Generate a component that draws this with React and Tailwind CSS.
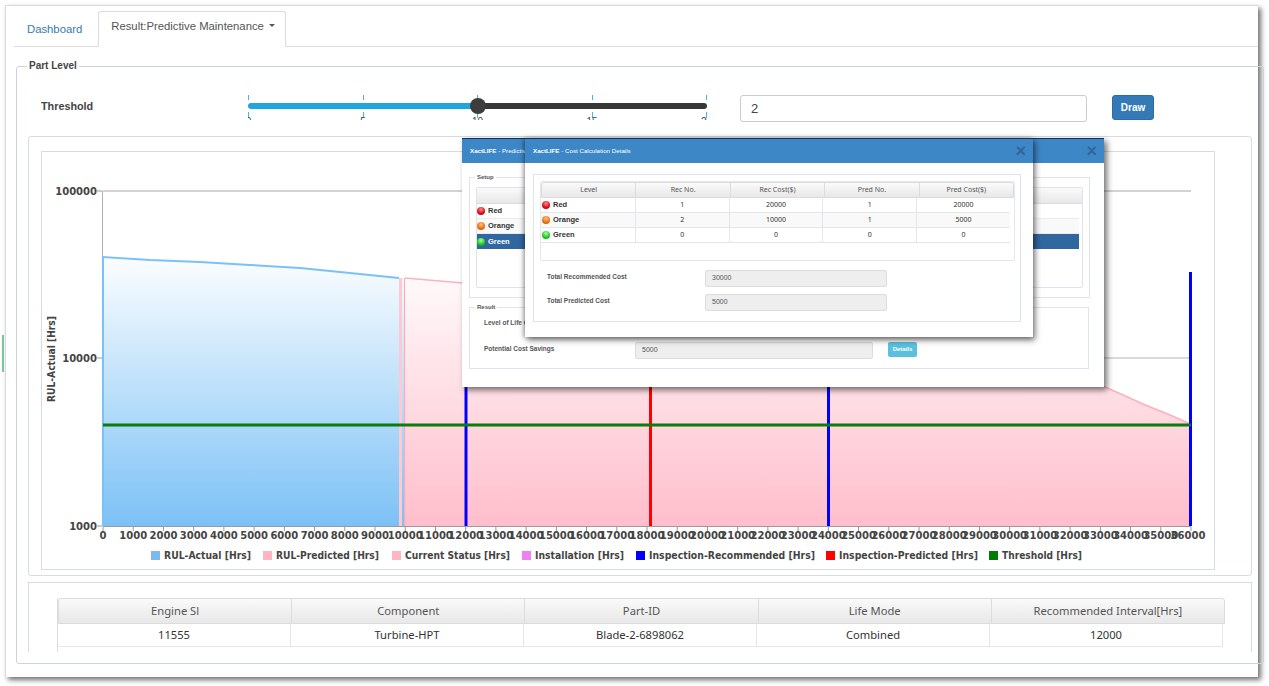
const xTicks = Array.from({ length: 37 }, (_, i) => i * 1000);
const xPos = (v) => 103 + (v / 36000) * 1088;

const legendItems = [
  { label: "RUL-Actual [Hrs]", color: "#7cb9ee", x: 151, w: 87 },
  { label: "RUL-Predicted [Hrs]", color: "#ffb6c4", x: 263, w: 103 },
  { label: "Current Status [Hrs]", color: "#ffb6c4", x: 392, w: 105 },
  { label: "Installation [Hrs]", color: "#ee82ee", x: 522, w: 89 },
  { label: "Inspection-Recommended [Hrs]", color: "#0000ff", x: 636, w: 166 },
  { label: "Inspection-Predicted [Hrs]", color: "#ff0000", x: 826, w: 139 },
  { label: "Threshold [Hrs]", color: "#007a00", x: 989, w: 80 },
];

const predicted = "405,278 463,283 700,310 1103,386 1123,395 1143,404 1170,415 1188,423 1191,425";

function Chart() {
  return (
    <svg viewBox="42 152 1172 417" className="block w-[1172px] h-[417px]" fontFamily="'DejaVu Sans', sans-serif">
      <defs>
        <linearGradient id="blueFill" gradientUnits="userSpaceOnUse" x1="0" y1="250" x2="0" y2="526">
          <stop offset="0" stopColor="#ffffff" />
          <stop offset="1" stopColor="#7cc1f6" />
        </linearGradient>
        <linearGradient id="pinkFill" gradientUnits="userSpaceOnUse" x1="0" y1="255" x2="0" y2="526">
          <stop offset="0" stopColor="#ffffff" />
          <stop offset="1" stopColor="#ffbecb" />
        </linearGradient>
      </defs>

      <line x1="103" y1="191" x2="1191" y2="191" stroke="#a8a8a8" />
      <line x1="103" y1="358" x2="1191" y2="358" stroke="#b5b5b5" />
      <line x1="102.5" y1="191" x2="102.5" y2="526" stroke="#b0b0b0" />

      <polygon points={`${predicted} 1191,526 405,526`} fill="url(#pinkFill)" />
      <polyline points={predicted} fill="none" stroke="#ffb0bd" strokeWidth="1.5" />

      <rect x="399" y="278" width="3" height="248" fill="#ffc9d2" />
      <rect x="402" y="278" width="2" height="248" fill="url(#blueFill)" />
      <line x1="404.5" y1="278" x2="404.5" y2="526" stroke="#ffa9b8" />

      <polygon points="103,257 150,260 200,262 250,265 300,268 350,273 399,278 399,526 103,526" fill="url(#blueFill)" />
      <polyline points="103,526 103,257 150,260 200,262 250,265 300,268 350,273 399,278" fill="none" stroke="#7cc1f6" strokeWidth="2" />

      <line x1="466" y1="380" x2="466" y2="526" stroke="#0000ff" strokeWidth="3" />
      <line x1="650.5" y1="380" x2="650.5" y2="526" stroke="#ff0000" strokeWidth="3" />
      <line x1="828.5" y1="380" x2="828.5" y2="526" stroke="#0000ff" strokeWidth="3" />
      <line x1="1190.5" y1="272" x2="1190.5" y2="526" stroke="#0000ff" strokeWidth="3" />
      <line x1="103" y1="425" x2="1191" y2="425" stroke="#0a7d0a" strokeWidth="3" />

      <line x1="97" y1="191" x2="102" y2="191" stroke="#999" />
      <line x1="97" y1="358" x2="102" y2="358" stroke="#999" />
      <line x1="97" y1="526" x2="102" y2="526" stroke="#999" />
      <g fontSize="10" fontWeight="700" fill="#444" textAnchor="end">
        <text x="97" y="194.5">100000</text>
        <text x="97" y="361.5">10000</text>
        <text x="97" y="530">1000</text>
      </g>
      <text
        transform="translate(55 359) rotate(-90)"
        fontSize="10"
        fontWeight="700"
        fill="#444"
        textAnchor="middle"
        textLength="86"
        lengthAdjust="spacingAndGlyphs"
      >
        RUL-Actual [Hrs]
      </text>

      <line x1="103" y1="526.5" x2="1191" y2="526.5" stroke="#9a9a9a" />
      {xTicks.map((v) => (
        <g key={v}>
          <line x1={xPos(v)} y1="527" x2={xPos(v)} y2="531" stroke="#999" />
          <text x={v === 36000 ? 1188 : xPos(v)} y="539" fontSize="10" fontWeight="700" fill="#444" textAnchor="middle">
            {v}
          </text>
        </g>
      ))}

      {legendItems.map((item) => (
        <g key={item.label}>
          <rect x={item.x} y="551" width="9" height="9" fill={item.color} />
          <text
            x={item.x + 13}
            y="559"
            fontSize="10"
            fontWeight="700"
            fill="#444"
            textLength={item.w}
            lengthAdjust="spacingAndGlyphs"
          >
            {item.label}
          </text>
        </g>
      ))}
    </svg>
  );
}

function Slider() {
  const labels = ["0", "5", "10", "15", "20"];
  return (
    <div className="relative w-[459px] h-[25px] overflow-hidden">
      <div className="flex justify-between h-full">
        {labels.map((label) => (
          <div key={label} className="w-px flex flex-col items-center">
            <div className="w-px h-[5px] shrink-0 bg-[#4ab5dd]" />
            <div className="h-[12px] shrink-0" />
            <div className="w-px h-[6px] shrink-0 bg-[#4ab5dd]" />
            <span className="-mt-[2px] text-[10px] leading-[12px] text-[#444]">{label}</span>
          </div>
        ))}
      </div>
      <div className="absolute left-0 right-0 top-[8px] h-[6px] flex rounded-[3px] overflow-hidden">
        <div className="w-[230px] bg-[#1ea7dd]" />
        <div className="flex-1 bg-[#373737]" />
      </div>
      <div className="absolute left-[222px] top-[3px] w-[16px] h-[16px] rounded-full bg-[#3d3d3d]" />
    </div>
  );
}

function DataTable({ head, rows, width, bodyWidth, headClass, rowClass, textClass, firstLeft, lastBorder }) {
  return (
    <div style={{ width }} className={textClass}>
      <div className={`flex border border-[#dcdcdc] rounded-t-[3px] bg-gradient-to-b from-[#fafafa] to-[#e8e8e8] text-[#555] ${headClass}`}>
        {head.map((h, i) => (
          <div key={h} className={`flex-1 flex items-center justify-center ${i < head.length - 1 ? "border-r border-[#dcdcdc]" : ""}`}>
            {h}
          </div>
        ))}
      </div>
      <div style={{ width: bodyWidth }}>
        {rows.map((row, r) => (
          <div key={r} className={`flex border-b border-[#e4e7ea] ${r % 2 === 1 ? "bg-[#f9f9f9]" : "bg-white"} text-[#333] ${rowClass}`}>
            {row.map((cell, i) => (
              <div
                key={i}
                className={`flex-1 flex items-center ${i < row.length - 1 || lastBorder ? "border-r border-[#e4e7ea]" : ""} ${i === 0 && firstLeft ? "justify-start pl-[1px]" : "justify-center"}`}
              >
                {cell}
              </div>
            ))}
          </div>
        ))}
      </div>
    </div>
  );
}

function Dot({ color }) {
  const fills = {
    red: "bg-[radial-gradient(circle_at_50%_30%,#ff8a8a,#d60d1a_60%,#a00010)]",
    orange: "bg-[radial-gradient(circle_at_50%_30%,#ffc080,#e8720e_60%,#b85000)]",
    green: "bg-[radial-gradient(circle_at_50%_30%,#a8ffa8,#1ec71e_60%,#0c9a0c)]",
  };
  return <span className={`inline-block w-[8px] h-[8px] rounded-full mr-[3px] shrink-0 ${fills[color]}`} />;
}

function Level({ color, name }) {
  return (
    <span className="flex items-center font-bold text-[7.5px] font-['Liberation_Sans',sans-serif] text-[#333]">
      <Dot color={color} />
      {name}
    </span>
  );
}

function ModalHeader({ title }) {
  return (
    <div className="h-[25px] shrink-0 flex items-center justify-between border-t border-[#14324f] bg-[#3e87c6] pl-[8px] pr-[7px] text-white text-[6.2px]">
      <span className="whitespace-nowrap overflow-hidden">
        <b>XactLIFE</b> - {title}
      </span>
      <span className="text-[#2f679a] text-[18px] font-bold leading-none">×</span>
    </div>
  );
}

function PredictiveModal() {
  return (
    <div className="absolute left-[456px] top-[132px] w-[642px] h-[249px] flex flex-col bg-white shadow-[3px_3px_6px_rgba(0,0,0,0.55)] text-[6.5px] text-[#555]">
      <ModalHeader title="Predictive Maintenance" />
      <div className="px-[7px] pt-[10px]">
        <fieldset className="h-[125px] border border-[#dfe4e8] px-[6px] w-[620px]">
          <legend className="-ml-[1px] px-[2px] text-[6px] font-bold leading-[8px]">Setup</legend>
          <div className="w-[607px] h-[101px] mt-[6px] border border-[#dfe4e8] rounded-[2px]">
            <div className="h-[16px] bg-gradient-to-b from-[#fafafa] to-[#e8e8e8] border-b border-[#dcdcdc]" />
            <div className="w-[602px]">
              <div className="h-[15px] flex items-center border-b border-[#e9ecef]"><Level color="red" name="Red" /></div>
              <div className="h-[15px] flex items-center border-b border-[#e9ecef] bg-[#f9f9f9]"><Level color="orange" name="Orange" /></div>
              <div className="h-[15px] flex items-center bg-[#31679f] text-white">
                <span className="flex items-center font-bold text-[7.5px]"><Dot color="green" />Green</span>
              </div>
            </div>
          </div>
        </fieldset>
        <fieldset className="mt-[5px] h-[66px] border border-[#dfe4e8] px-[14px] w-[620px]">
          <legend className="-ml-[9px] px-[2px] text-[6px] font-bold leading-[8px]">Result</legend>
          <div className="mt-[4px] h-[16px] flex items-center font-bold">Level of Life Cycle</div>
          <div className="mt-[11px] flex items-start">
            <span className="w-[151px] font-bold leading-[14px]">Potential Cost Savings</span>
            <div className="w-[238px] h-[17px] flex items-center pl-[6px] bg-[#eeeeee] border border-[#dddddd] rounded-[2px] text-[7px] font-normal">5000</div>
            <div className="ml-[15px] w-[29px] h-[15px] flex items-center justify-center bg-[#5bc0de] rounded-[2px] text-white text-[6px] font-bold">Details</div>
          </div>
        </fieldset>
      </div>
    </div>
  );
}

function CostModal() {
  return (
    <div className="absolute left-[519px] top-[132px] w-[508px] h-[199px] flex flex-col bg-white shadow-[2px_3px_6px_rgba(0,0,0,0.55),-2px_0_4px_rgba(0,0,0,0.25)] text-[6.5px] text-[#555]">
      <ModalHeader title="Cost Calculation Details" />
      <div className="mx-[8px] mt-[11px] w-[488px] h-[148px] border border-[#dfe4e8] pl-[6px] pt-[6px]">
        <div className="w-[475px] h-[80px] border border-[#e4e7ea] rounded-[2px]">
          <DataTable
            head={["Level", "Rec No.", "Rec Cost($)", "Pred No.", "Pred Cost($)"]}
            rows={[
              [<Level color="red" name="Red" />, "1", "20000", "1", "20000"],
              [<Level color="orange" name="Orange" />, "2", "10000", "1", "5000"],
              [<Level color="green" name="Green" />, "0", "0", "0", "0"],
            ]}
            width={473}
            bodyWidth={469}
            headClass="h-[16px]"
            rowClass="h-[15px]"
            textClass="text-[7px] font-['Noto_Sans',sans-serif]"
            firstLeft
          />
        </div>
        <div className="mt-[9px] flex pl-[7px]">
          <span className="w-[158px] font-bold leading-[14px]">Total Recommended Cost</span>
          <div className="w-[182px] h-[17px] flex items-center pl-[6px] bg-[#eeeeee] border border-[#dddddd] rounded-[2px] text-[7px]">30000</div>
        </div>
        <div className="mt-[7px] flex pl-[7px]">
          <span className="w-[158px] font-bold leading-[14px]">Total Predicted Cost</span>
          <div className="w-[182px] h-[17px] flex items-center pl-[6px] bg-[#eeeeee] border border-[#dddddd] rounded-[2px] text-[7px]">5000</div>
        </div>
      </div>
    </div>
  );
}

export default function App() {
  return (
    <div className="w-[1269px] h-[686px] overflow-hidden bg-white font-['Liberation_Sans',Arial,sans-serif]">
      <div className="relative ml-[5px] w-[1253px] h-[672px] top-[5px] bg-white border-t border-l border-[#d8dbde] shadow-[3px_3px_5px_rgba(0,0,0,0.55)]">
        <nav className="ml-[8px] pt-[5px] h-[41px] flex items-end border-b border-[#dddddd] text-[11.3px]">
          <a className="h-[35px] px-[13px] mr-[3px] pt-[10px] text-[#337ab7]">Dashboard</a>
          <div className="h-[36px] -mb-px pl-[12px] pr-[10px] pt-[6px] bg-white border border-b-0 border-[#dddddd] rounded-t-[3px] text-[#555] flex items-start">
            Result:Predictive Maintenance
            <span className="ml-[5px] mt-[6px] border-x-[3px] border-x-transparent border-t-[3px] border-t-[#555]" />
          </div>
        </nav>

        <fieldset className="ml-[10px] mt-[12px] w-[1241px] h-[605px] border border-[#ccd4db] rounded-[3px] px-[11px]">
          <legend className="-ml-[1px] px-[2px] text-[10px] leading-[14px] font-bold text-[#444]">Part Level</legend>

          <div className="mt-[22px] h-[27px] flex items-start">
            <label className="w-[220px] pl-[13px] pt-[4px] text-[10.8px] font-bold leading-[14px] text-[#444]">Threshold</label>
            <Slider />
            <div className="ml-[33px] w-[347px] h-[27px] flex items-center pl-[10px] border border-[#cccccc] rounded-[3px] text-[13px] text-[#444]">2</div>
            <button className="ml-[25px] w-[42px] h-[25px] bg-[#337ab7] border border-[#2e6da4] rounded-[3px] text-white text-[10px] font-bold">Draw</button>
          </div>

          <div className="mt-[14px] w-[1224px] h-[440px] border border-[#d6dce1] rounded-[3px] pl-[12px] pt-[14px]">
            <div className="w-[1174px] h-[419px] border border-[#d6dce1]">
              <Chart />
            </div>
          </div>

          <div className="mt-[6px] w-[1224px] h-[70px] overflow-hidden border-t border-x border-[#d6dce1] pl-[28px] pt-[15px]">
            <div className="border-l border-[#dcdcdc] h-full">
              <DataTable
                head={["Engine Sl", "Component", "Part-ID", "Life Mode", "Recommended Interval[Hrs]"]}
                rows={[["11555", "Turbine-HPT", "Blade-2-6898062", "Combined", "12000"]]}
                width={1167}
                bodyWidth={1165}
                headClass="h-[26px]"
                rowClass="h-[23px]"
                textClass="text-[11.2px] font-['Noto_Sans',sans-serif]"
                lastBorder
              />
            </div>
          </div>
        </fieldset>

        <PredictiveModal />
        <CostModal />
      </div>
      <div className="fixed left-[2px] top-[335px] w-[2px] h-[37px] bg-[#7cc4a0]" />
    </div>
  );
}
